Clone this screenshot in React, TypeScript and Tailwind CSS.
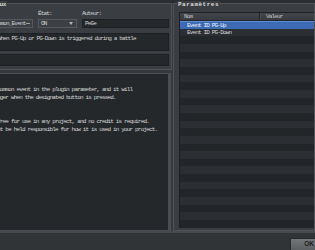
const rows = Array.from({ length: 28 }, (_, i) => i);

const help = [
  'Set the common event in the plugin parameter, and it will',
  'then trigger when the designated button is pressed.',
  '',
  '',
  'This is free for use in any project, and no credit is required.',
  'I will not be held responsible for how it is used in your project.',
];

const params = ['Event ID PG-Up', 'Event ID PG-Down'];

export default function App() {
  return (
    <div className="w-[315px] h-[250px] overflow-hidden bg-[#36393d] flex flex-col font-['Liberation_Mono','DejaVu_Sans_Mono',monospace] text-[6px] leading-[8px] tracking-[-0.84px] text-[#d4d4d4]">
      <div className="h-[3px] shrink-0 bg-[#2b2e31]" />

      <div className="flex h-[228px] shrink-0">
        {/* Colonne gauche : généraux + aide */}
        <div className="ml-[-29px] w-[201px] shrink-0 flex flex-col">
          <div className="h-[67px] shrink-0 flex flex-col border border-[#4f5256] bg-[#3a3d41] pl-[9px] pr-[2px] pb-[3px]">
            <div className="mt-[-3px] ml-[-3px] self-start px-[1px] bg-[#3a3d41] font-bold tracking-[-0.2px] text-[#dcdcdc]">
              Généraux
            </div>

            <div className="mt-[1px] flex gap-[5px]">
              <div className="w-[52px] flex flex-col gap-[1px]">
                <span>Nom:</span>
                <div className="h-[9px] flex items-center justify-between pl-[2px] pr-[2px] border border-[#55585c] bg-[#3c3f43]">
                  <span>PG_Common_Event</span>
                  <span className="w-[4px] h-[1px] bg-[#a0a0a0]" />
                </div>
              </div>
              <div className="w-[39px] flex flex-col gap-[1px]">
                <span>État:</span>
                <div className="h-[9px] flex items-center justify-between pl-[2px] pr-[3px] border border-[#55585c] bg-[#3c3f43]">
                  <span>ON</span>
                  <svg width="4" height="3" viewBox="0 0 4 3">
                    <path d="M0 0h4L2 3z" fill="#b4b4b4" />
                  </svg>
                </div>
              </div>
              <div className="flex-1 flex flex-col gap-[1px]">
                <span>Auteur:</span>
                <div className="h-[9px] flex items-center pl-[2px] border border-[#1e2023] bg-[#25282b]">
                  PeGe
                </div>
              </div>
            </div>

            <div className="mt-[5px] h-[18px] pl-[2px] pt-[1px] border border-[#1e2023] bg-[#25282b] whitespace-nowrap overflow-hidden">
              Runs when PG-Up or PG-Down is triggered during a battle
            </div>
            <div className="mt-[3px] h-[12px] border border-[#1e2023] bg-[#25282b]" />
          </div>

          <div className="mt-[3px] flex-1 mr-[1px] border border-[#4a4d51] border-r-[3px] bg-[#24282b] pl-[3px] pt-[12px] overflow-hidden whitespace-nowrap">
            {help.map((line, i) => (
              <div key={i} className="h-[8px]">
                {line}
              </div>
            ))}
          </div>
        </div>

        {/* Paramètres */}
        <div className="ml-[1px] flex-1 flex flex-col border border-[#4f5256] bg-[#3a3d41] pl-[5px] pb-[2px] min-w-0">
          <div className="mt-[-3px] ml-[-2px] self-start px-[1px] bg-[#3a3d41] font-bold tracking-[0.5px] text-[#dcdcdc]">
            Paramètres
          </div>
          <div className="mt-[3px] flex-1 flex flex-col border-l border-t border-[#1e2023] overflow-hidden">
            <div className="h-[8px] shrink-0 flex bg-gradient-to-b from-[#43464a] to-[#373a3e] border-b border-[#25282b] text-[#c8c8c8]">
              <div className="w-[80px] pl-[4px] border-r border-[#25282b]">Nom</div>
              <div className="pl-[5px] border-l border-[#4a4d51]">Valeur</div>
            </div>
            {rows.map((i) => (
              <div
                key={i}
                className={
                  i === 0
                    ? 'h-[7.67px] shrink-0 pl-[7px] leading-[7.67px] bg-[#3c6ab4] border-t border-[#5d8bd2] text-[#eef2fa]'
                    : i % 2 === 1
                      ? 'h-[7.67px] shrink-0 pl-[7px] leading-[7.67px] bg-[#2b2f33]'
                      : 'h-[7.67px] shrink-0 pl-[7px] leading-[7.67px] bg-[#222629]'
                }
              >
                {params[i] ?? ''}
              </div>
            ))}
          </div>
        </div>
      </div>

      <div className="h-[2px] shrink-0 bg-[#46494d]" />

      <div className="flex-1 flex justify-end items-start pt-[5px] bg-[#313437]">
        <button className="mr-[-13px] w-[38px] h-[14px] flex justify-center pt-[1px] border border-[#26282b] rounded-[1px] bg-gradient-to-b from-[#74777a] to-[#5a5d60] font-['Liberation_Sans',sans-serif] font-bold text-[6.5px] leading-[8px] tracking-normal text-[#1c1c1c]">
          OK
        </button>
      </div>
    </div>
  );
}
